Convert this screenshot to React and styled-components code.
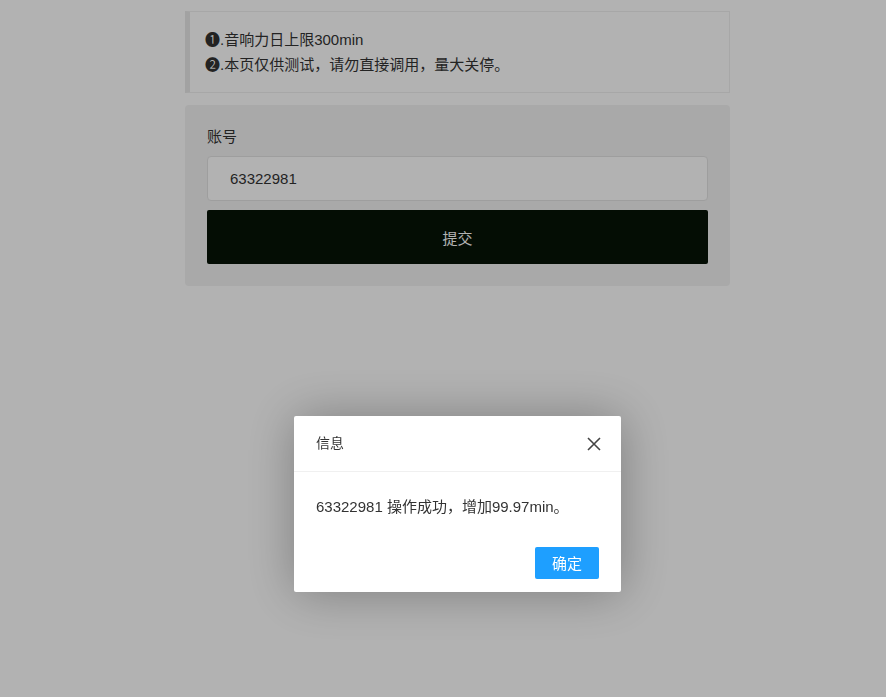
import React from "react";
import styled, { createGlobalStyle } from "styled-components";

const fontFamily = "'Liberation Sans', 'Noto Sans CJK SC', sans-serif";

const GlobalStyle = createGlobalStyle`
  html, body {
    margin: 0;
    padding: 0;
    background: #fff;
    font-family: ${fontFamily};
    color: #333;
  }
`;

const Page = styled.div`
  width: 545px;
  margin: 0 0 0 185px;
  padding-top: 11px;
`;

const Quote = styled.div`
  border: 1px solid #efefef;
  border-left: 5px solid #e8e8e8;
  padding: 15px;
  font-size: 15px;
  line-height: 25px;
  color: #333;
`;

const Card = styled.div`
  margin-top: 12px;
  background: #f2f2f2;
  border-radius: 4px;
  padding: 21px 22px 22px;
`;

const Label = styled.label`
  display: block;
  font-size: 15px;
  line-height: 22px;
  color: #333;
  margin-bottom: 8px;
`;

const Input = styled.input`
  display: block;
  box-sizing: border-box;
  width: 100%;
  height: 45px;
  padding: 0 22px;
  border: 1px solid #e3e3e3;
  border-radius: 4px;
  background: #fff;
  font-family: ${fontFamily};
  font-size: 15px;
  color: #333;
  outline: none;
`;

const Submit = styled.button`
  display: block;
  width: 100%;
  height: 54px;
  margin-top: 9px;
  border: none;
  border-radius: 2px;
  background: #071307;
  color: #fff;
  font-family: ${fontFamily};
  font-size: 15px;
`;

const Shade = styled.div`
  position: fixed;
  inset: 0;
  background: rgba(0, 0, 0, 0.3);
`;

const Dialog = styled.div`
  position: fixed;
  left: 294px;
  top: 416px;
  width: 327px;
  background: #fff;
  border-radius: 2px;
  box-shadow: 1px 1px 50px rgba(0, 0, 0, 0.3);
`;

const DialogTitle = styled.div`
  display: flex;
  align-items: center;
  justify-content: space-between;
  box-sizing: border-box;
  height: 56px;
  padding: 0 20px 3px 22px;
  border-bottom: 1px solid #f0f0f0;
  font-size: 14px;
  color: #333;
`;

const Close = styled.span`
  display: flex;
  width: 14px;
  height: 14px;
  margin-top: 3px;
`;

const DialogBody = styled.div`
  padding: 24px 22px 0;
  font-size: 15px;
  line-height: 22px;
  color: #333;
`;

const DialogFooter = styled.div`
  display: flex;
  justify-content: flex-end;
  padding: 29px 22px 13px;
`;

const OkButton = styled.button`
  height: 32px;
  padding: 0 17px 1px;
  border: none;
  border-radius: 2px;
  background: #1e9fff;
  color: #fff;
  font-family: ${fontFamily};
  font-size: 15px;
`;

function App() {
  return (
    <>
      <GlobalStyle />
      <Page>
        <Quote>
          <div>❶.音响力日上限300min</div>
          <div>❷.本页仅供测试，请勿直接调用，量大关停。</div>
        </Quote>
        <Card>
          <Label htmlFor="account">账号</Label>
          <Input id="account" defaultValue="63322981" />
          <Submit>提交</Submit>
        </Card>
      </Page>
      <Shade />
      <Dialog>
        <DialogTitle>
          信息
          <Close>
            <svg width="14" height="14" viewBox="0 0 14 14">
              <path d="M1 1L13 13M13 1L1 13" stroke="#444" strokeWidth="1.6" />
            </svg>
          </Close>
        </DialogTitle>
        <DialogBody>63322981 操作成功，增加99.97min。</DialogBody>
        <DialogFooter>
          <OkButton>确定</OkButton>
        </DialogFooter>
      </Dialog>
    </>
  );
}

export default App;
